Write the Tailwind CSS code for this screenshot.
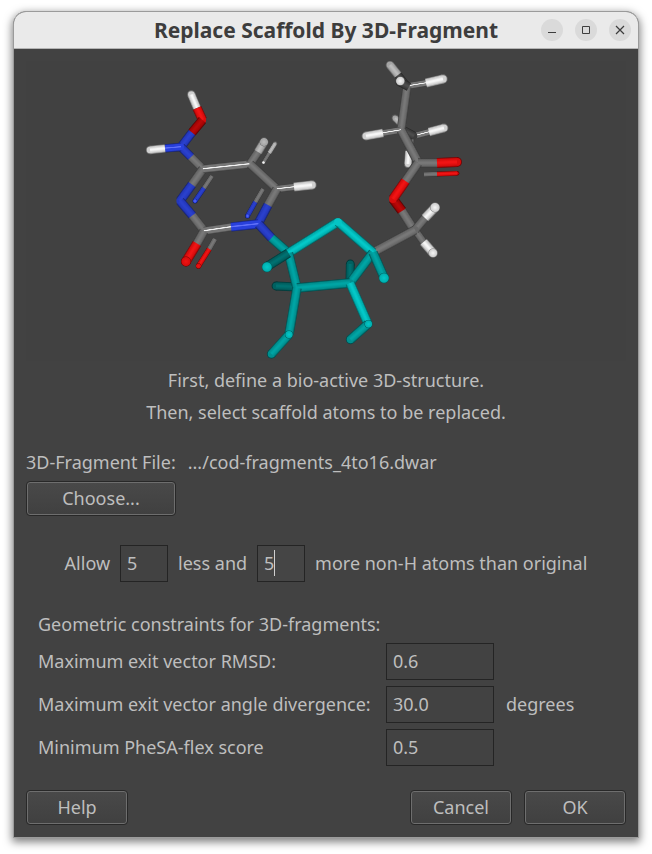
<!DOCTYPE html>
<html lang="en">
<head>
<meta charset="utf-8">
<title>Replace Scaffold By 3D-Fragment</title>
<script src="https://cdn.jsdelivr.net/npm/@tailwindcss/browser@4"></script>
</head>
<body class="bg-white pt-[11px] px-[13px] pb-4 font-['Noto_Sans',sans-serif] text-[18px] leading-6 text-[#bebebe]">
<main class="rounded-t-[13px] border border-[#9b9b9b] bg-[#424242] shadow-[0_3px_9px_1px_rgba(0,0,0,0.5)]">
  <header class="relative flex h-[37px] items-center justify-center rounded-t-[12px] border-b border-[#b4b4b4] bg-[#eaeaea]">
    <h1 class="text-[21px] font-bold text-[#3d3d3d]">Replace Scaffold By 3D-Fragment</h1>
    <div class="absolute right-[7px] flex gap-3">
      <button type="button" aria-label="Minimize" class="size-[22px] rounded-full bg-[#dadada]">
        <svg viewBox="0 0 22 22" class="size-full" fill="none" stroke="#3d3d3d"><path d="M7 13.5h8"/></svg>
      </button>
      <button type="button" aria-label="Maximize" class="size-[22px] rounded-full bg-[#dadada]">
        <svg viewBox="0 0 22 22" class="size-full" fill="none" stroke="#3d3d3d"><path d="M7.5 7.5h7v7h-7z"/></svg>
      </button>
      <button type="button" aria-label="Close" class="size-[22px] rounded-full bg-[#dadada]">
        <svg viewBox="0 0 22 22" class="size-full" fill="none" stroke="#3d3d3d" stroke-width="1.2"><path d="M7 7l8 8M15 7l-8 8"/></svg>
      </button>
    </div>
  </header>

  <form class="p-3">
    <svg id="molecule" viewBox="26 61 600 300" class="block w-full bg-[#414141]" role="img" aria-label="3D structure"></svg>

    <div class="mt-[3px] text-center leading-8">
      <p>First, define a bio-active 3D-structure.</p>
      <p>Then, select scaffold atoms to be replaced.</p>
    </div>

    <div class="mt-[22px] flex gap-3">
      <span>3D-Fragment File:</span>
      <span>.../cod-fragments_4to16.dwar</span>
    </div>
    <button type="button" class="mt-[7px] block h-[35px] w-[150px] rounded border border-[#282828] bg-linear-to-b from-[#494949] to-[#404040] pb-[2px] inset-ring inset-ring-[#6e6e6e]">Choose...</button>

    <div class="mt-[29px] flex items-center justify-center gap-[10px]">
      <label for="less" class="pb-[2px]">Allow</label>
      <input id="less" value="5" class="h-[37px] w-12 border border-[#242424] bg-[#424242] px-[6px] pb-[2px] outline-none">
      <label for="more" class="pb-[2px]">less and</label>
      <div class="relative">
        <input id="more" value="5" class="block h-[37px] w-12 border border-[#242424] bg-[#454545] px-[6px] pb-[2px] caret-transparent outline-none">
        <span class="absolute top-[5px] left-[17px] h-[26px] w-px bg-[#d0d0d0]"></span>
      </div>
      <span class="pb-[2px]">more non-H atoms than original</span>
    </div>

    <fieldset class="mt-[30px] pl-3">
      <legend class="mb-[7px]">Geometric constraints for 3D-fragments:</legend>
      <div class="grid grid-cols-[336px_108px_1fr] items-center gap-x-3 gap-y-[6px]">
        <label for="rmsd" class="pb-[2px]">Maximum exit vector RMSD:</label>
        <input id="rmsd" value="0.6" class="h-[37px] w-full border border-[#242424] bg-[#424242] px-[6px] pb-[2px] outline-none">
        <span></span>
        <label for="angle" class="pb-[2px]">Maximum exit vector angle divergence:</label>
        <input id="angle" value="30.0" class="h-[37px] w-full border border-[#242424] bg-[#424242] px-[6px] pb-[2px] outline-none">
        <span class="pb-[2px]">degrees</span>
        <label for="score" class="pb-[2px]">Minimum PheSA-flex score</label>
        <input id="score" value="0.5" class="h-[37px] w-full border border-[#242424] bg-[#424242] px-[6px] pb-[2px] outline-none">
      </div>
    </fieldset>

    <div class="mt-6 flex gap-3">
      <button type="button" class="mr-auto h-[35px] w-[102px] rounded border border-[#282828] bg-linear-to-b from-[#494949] to-[#404040] pb-[2px] inset-ring inset-ring-[#6e6e6e]">Help</button>
      <button type="button" class="h-[35px] w-[102px] rounded border border-[#282828] bg-linear-to-b from-[#494949] to-[#404040] pb-[2px] inset-ring inset-ring-[#6e6e6e]">Cancel</button>
      <button type="button" class="h-[35px] w-[102px] rounded border border-[#282828] bg-linear-to-b from-[#494949] to-[#404040] pb-[2px] inset-ring inset-ring-[#6e6e6e]">OK</button>
    </div>
  </form>
</main>

<script>
// Shades of a stick: lit centre, body, shaded rim
const shade = {
  C: ['#787878', '#686868', '#383838'],
  L: ['#f2f2f2', '#777777', '#3c3c3c'],
  D: ['#4c4c4c', '#3c3c3c', '#222222'],
  H: ['#f6f6f6', '#d0d0d0', '#707070'],
  G: ['#bcbcbc', '#a4a4a4', '#5a5a5a'],
  N: ['#2a40cc', '#2438bc', '#141f66'],
  M: ['#6070f8', '#2840dc', '#141f70'],
  O: ['#f01414', '#d80c0c', '#700404'],
  P: ['#b80808', '#a40404', '#500202'],
  T: ['#04c8c8', '#00b0b0', '#005c5c'],
  S: ['#00a4a4', '#009090', '#004c4c'],
  U: ['#007070', '#006060', '#003636'],
};
// Sticks, back to front: x1, y1, x2, y2, thickness, shade
const sticks = [
  [404,127,395,118,6,'G'],
  [411,137,409,150,7,'C'],[409,151,408,164,7,'H'],
  [414,136,429,132,6,'L'],[429,132,444,128,8,'H'],
  [401,129,414,136,8,'D'],
  [407,86,398,75,7,'D'],[398,75,390,65,8,'G'],
  [408,86,426,83,6,'L'],[426,83,443,79,8.5,'H'],
  [407,87,401,130,8,'C'],
  [409,87,400,82,8,'D'],
  [401,130,383,133,6,'L'],[383,133,366,136,8,'H'],
  [401,130,418,162,8.5,'C'],
  [418,163,438,163,8.5,'C'],[437,163,457,162,9,'O'],
  [424,174.5,438,174,4,'C'],[437,174,457,173.3,4,'O'],
  [418,163,405.5,181,8.5,'C'],
  [393,199,402,211,9,'P'],[405.5,181,393,199,9,'O'],
  [402,211,414,230,8.5,'C'],
  [415,230,423.5,242,7,'C'],[423.5,242,433,253,8.5,'H'],
  [415,230,425,218,8,'C'],[425,218,435,207.5,8.5,'H'],
  [373,252.5,415,230,8.5,'C'],

  [197,108,191.3,94.5,7.5,'H'],[197,108,202.5,120,8.5,'O'],
  [202.5,120,192,132.5,8.5,'P'],[192,132.5,181,147,8,'N'],
  [181,147,191,157,8,'N'],[191,157,203,169,8,'C'],
  [165,148.4,181,147,7.5,'M'],[165,148.4,150,150,7.5,'H'],
  [203,169,192,184.5,8.5,'C'],[192,184.5,180,201,8.5,'N'],
  [180,201,192.3,215.5,8.5,'N'],[192.3,215.5,204,230.5,8.5,'C'],
  [203,169,250,164,7.5,'L'],
  [250,164,258,152,8,'C'],[258,152,264,142,8,'G'],
  [250,164,277,189,8,'C'],
  [277,189,294,187,6.5,'L'],[294,187,312,185,8.5,'H'],
  [277,189,268,205,8.5,'C'],[268,205,258.5,223,8.5,'N'],
  [204,231,231,227,7.5,'L'],[231,227,258.5,224,8.5,'M'],
  [204,231,197,243.5,8.5,'C'],[197,243.5,186,261.5,9,'O'],
  [215,239,209.3,249,4.5,'C'],[209.3,249,198.5,266,4.5,'O'],
  [212,176,204,188,4,'C'],[204,188,195,201,4.2,'N'],
  [263,189,255.4,202,4,'C'],[255.4,202,247.5,216,4.2,'N'],
  [263.5,162.5,269.3,153,3,'C'],[269.3,153,275.2,143.5,3.5,'G'],

  [350,281,350.3,264,8,'U'],[297,287,276,286,8,'U'],
  [258.5,224,271.5,238,8.5,'N'],[271.5,238,288.5,253,8.5,'S'],
  [288.5,253,338,222,8.5,'T'],[338,222,373,252.5,8.5,'T'],
  [288.5,253,297,288,8.5,'S'],
  [288.5,253,268,266,8.5,'U'],
  [373,252.5,350,283,8.5,'S'],
  [373,252.5,384,277.5,8.5,'S'],
  [297,288,350,283,8.5,'S'],
  [297,288,289,334.5,8.5,'S'],[289,334.5,271.5,354,8.5,'S'],
  [350,283,368,324,8.5,'T'],[368,324,350.5,339.5,8.5,'S'],
];
// Atoms facing the viewer: x, y, radius, shade
const tips = [
  [267,267,5.2,'T'],[384,278,5.2,'T'],[289,334.5,4,'T'],[368.5,324,4,'T'],
  [186,261.5,5,'O'],[435,207.5,5,'H'],[433,253,4.6,'H'],[400.3,81,4.6,'H'],
  [264,142,4.4,'G'],
  [195,201,2.2,'M'],[247.5,216,2.2,'M'],[263.5,162.5,1.6,'H'],[198.5,266,2.7,'O'],
];
// Sticks are drawn slightly wider so that their dark rim surrounds the body
const RIM = 0.8;
let defs = '', body = '';
sticks.forEach(([x1, y1, x2, y2, t, s], i) => {
  const w = t + RIM, len = Math.hypot(x2 - x1, y2 - y1);
  let nx = -(y2 - y1) / len, ny = (x2 - x1) / len;
  if (ny < 0) { nx = -nx; ny = -ny; }
  const h = w / 2, [a, b, c] = shade[s];
  const lit = s === 'L' || s === 'M' ? ['.36', '.42', '.5', '.58'] : ['.2', '.42', '.54', '.8'];
  defs += `<linearGradient id="s${i}" gradientUnits="userSpaceOnUse" x1="${x1 - nx * h}" y1="${y1 - ny * h}" x2="${x1 + nx * h}" y2="${y1 + ny * h}">`
    + `<stop offset="0" stop-color="${c}"/><stop offset=".15" stop-color="${b}"/><stop offset="${lit[0]}" stop-color="${b}"/>`
    + `<stop offset="${lit[1]}" stop-color="${a}"/><stop offset="${lit[2]}" stop-color="${a}"/><stop offset="${lit[3]}" stop-color="${b}"/>`
    + `<stop offset=".82" stop-color="${b}"/><stop offset="1" stop-color="${c}"/></linearGradient>`;
  const meets = (x, y) => sticks.some((o, j) => j !== i && (Math.hypot(o[0] - x, o[1] - y) < 3 || Math.hypot(o[2] - x, o[3] - y) < 3));
  // A free end gets a round, rimmed cap; a joint gets a plain filler below the next stick
  body += meets(x2, y2)
    ? `<circle cx="${x2}" cy="${y2}" r="${h - 1}" fill="${b}"/>`
    : `<circle cx="${x2}" cy="${y2}" r="${h}" fill="${c}"/><circle cx="${x2}" cy="${y2}" r="${h - 0.9}" fill="${b}"/>`;
  body += `<path d="M${x1} ${y1}L${x2} ${y2}" stroke="url(#s${i})" stroke-width="${w}"/>`;
});
// Smooth corner of the ring oxygen
body += '<circle cx="338" cy="222" r="3.8" fill="#04c4c4"/>';
tips.forEach(([x, y, r, s], i) => {
  const [a, b, c] = shade[s];
  defs += `<radialGradient id="t${i}"><stop offset="0" stop-color="${a}"/><stop offset=".8" stop-color="${b}"/><stop offset="1" stop-color="${c}"/></radialGradient>`;
  body += `<circle cx="${x}" cy="${y}" r="${r}" fill="url(#t${i})"/>`;
});
document.getElementById('molecule').innerHTML = `<defs>${defs}</defs><g fill="none">${body}</g>`;
</script>
</body>
</html>
